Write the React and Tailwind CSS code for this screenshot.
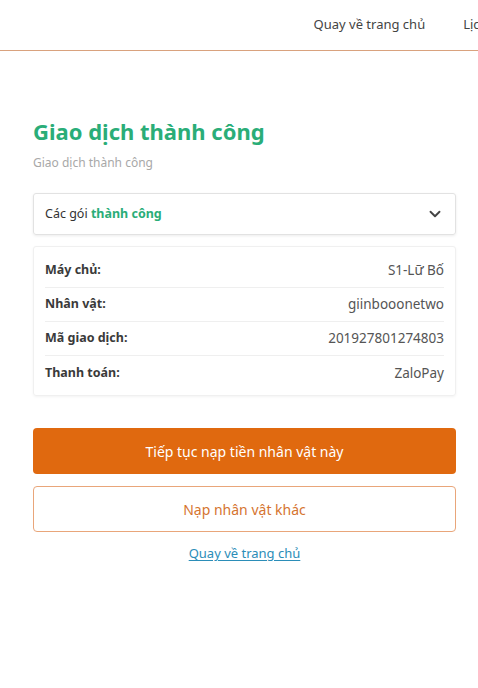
import { ChevronDown } from "lucide-react";

const rows = [
  { label: "Máy chủ:", value: "S1-Lữ Bố" },
  { label: "Nhân vật:", value: "giinbooonetwo" },
  { label: "Mã giao dịch:", value: "201927801274803" },
  { label: "Thanh toán:", value: "ZaloPay" },
];

export default function App() {
  return (
    <div
      className="min-h-screen bg-white text-[#333]"
      style={{ fontFamily: "'Noto Sans', 'Open Sans', sans-serif" }}
    >
      {/* Header */}
      <div className="h-[51px] border-b border-[#d9a27e] flex items-center justify-end overflow-hidden">
        <nav className="flex items-center gap-[38px] text-[13px] text-[#444] whitespace-nowrap translate-x-[28px]">
          <span>Quay về trang chủ</span>
          <span>Lịch sử</span>
        </nav>
      </div>

      <div className="ml-[33px] w-[423px] pt-[65px]">
        <h1 className="text-[22px] font-bold text-[#2aad78] leading-[30px]">Giao dịch thành công</h1>
        <p className="text-[12px] text-[#a8a8a8] mt-[8px]">Giao dịch thành công</p>

        {/* Dropdown */}
        <div className="mt-[21px] h-[42px] border border-[#e2e2e2] rounded-[3px] shadow-[0_1px_3px_rgba(0,0,0,0.08)] flex items-center justify-between pl-[11px] pr-[11px]">
          <span className="text-[12.5px] text-[#333]">
            Các gói <span className="font-bold text-[#2aad78]">thành công</span>
          </span>
          <ChevronDown size={18} strokeWidth={2.5} className="text-[#444]" />
        </div>

        {/* Details */}
        <div className="mt-[11px] border border-[#f0f0f0] rounded-[3px] shadow-[0_1px_3px_rgba(0,0,0,0.05)] px-[11px] pt-[7px] pb-[5px]">
          {rows.map((r, i) => (
            <div
              key={r.label}
              className={`h-[34px] flex items-center justify-between ${i < rows.length - 1 ? "border-b border-[#efefef]" : ""}`}
            >
              <span className="text-[12.5px] font-bold text-[#3a3a3a]">{r.label}</span>
              <span className="text-[13.5px] text-[#555]">{r.value}</span>
            </div>
          ))}
        </div>

        {/* Buttons */}
        <button className="mt-[32px] w-full h-[46px] rounded-[4px] bg-[#e0690f] text-white text-[14px] flex items-center justify-center">
          Tiếp tục nạp tiền nhân vật này
        </button>
        <button className="mt-[12px] w-full h-[46px] rounded-[4px] border border-[#e9a67a] bg-white text-[#d57430] text-[14px] flex items-center justify-center">
          Nạp nhân vật khác
        </button>
        <div className="mt-[8px] text-center">
          <a className="text-[13px] text-[#2b8db8] underline underline-offset-2">Quay về trang chủ</a>
        </div>
      </div>
    </div>
  );
}
